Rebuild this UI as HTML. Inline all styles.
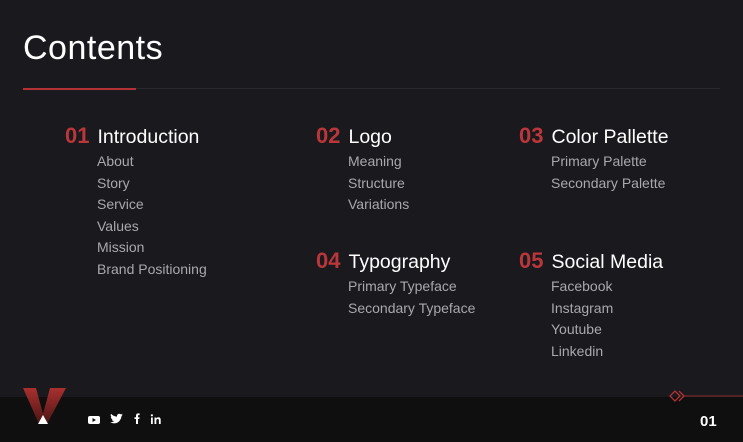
<!DOCTYPE html>
<html><head><meta charset="utf-8"><style>
*{margin:0;padding:0;box-sizing:border-box}
body{width:743px;height:442px;background:#1a191e;font-family:"Liberation Sans",sans-serif;position:relative;overflow:hidden;color:#fff}
.t{position:absolute;left:23px;top:29px;font-size:34px;font-weight:300;letter-spacing:0.5px}
.l1{position:absolute;left:23px;top:88px;width:113px;height:2px;background:#b23235}
.l2{position:absolute;left:136px;top:88px;width:584px;height:1px;background:#2a292e}
.s{position:absolute}
.s h2{font-size:19.5px;font-weight:normal;white-space:nowrap;height:24px}
.s h2 b{color:#b9373a;font-size:22px;font-weight:bold;margin-right:8px}
.s ul{list-style:none;margin-top:4px}
.s li{font-size:14px;color:#a9a8ad;height:21.5px;line-height:21.5px}
.f{position:absolute;left:0;top:397px;width:743px;height:45px;background:#0f0f10}
</style></head><body>
<div class="t">Contents</div>
<div class="l1"></div><div class="l2"></div>

<div class="s" style="left:65px;top:123px"><h2><b>01</b>Introduction</h2>
<ul style="margin-left:32px"><li>About</li><li>Story</li><li>Service</li><li>Values</li><li>Mission</li><li>Brand Positioning</li></ul></div>

<div class="s" style="left:316px;top:123px"><h2><b>02</b>Logo</h2>
<ul style="margin-left:32px"><li>Meaning</li><li>Structure</li><li>Variations</li></ul></div>

<div class="s" style="left:519px;top:123px"><h2><b>03</b>Color Pallette</h2>
<ul style="margin-left:32px"><li>Primary Palette</li><li>Secondary Palette</li></ul></div>

<div class="s" style="left:316px;top:248px"><h2><b>04</b>Typography</h2>
<ul style="margin-left:32px"><li>Primary Typeface</li><li>Secondary Typeface</li></ul></div>

<div class="s" style="left:519px;top:248px"><h2><b>05</b>Social Media</h2>
<ul style="margin-left:32px"><li>Facebook</li><li>Instagram</li><li>Youtube</li><li>Linkedin</li></ul></div>

<div class="f"></div>
<svg style="position:absolute;left:0;top:380px" width="743" height="62">
<defs><linearGradient id="g" x1="0" y1="0" x2="0" y2="1"><stop offset="0" stop-color="#a8302f"/><stop offset="1" stop-color="#4a1515"/></linearGradient></defs>
<polygon points="23,8 36,8 43,34 50,8 66,8 47,44 39,44" fill="url(#g)"/>
<polygon points="43,35 48,44 38,44" fill="#fff"/>
<g fill="#fff">
<rect x="88" y="36" width="12" height="8" rx="2"/><polygon points="92.5,38 92.5,42 96,40" fill="#0f0f10"/>
<path transform="translate(110,34)" d="M0,8 C3,10 8,10 10,6 C11,5 11.5,3 11.5,2 L13,0.5 L11.3,1 L12.2,-0.3 L10.6,0.3 C9.3,-1 7,0 7,2 L7,2.6 C4.5,2.5 2.5,1.3 1,-0.3 C0.3,1 0.7,2.5 1.8,3.3 L0.8,3 C0.8,4.3 1.8,5.2 2.8,5.5 L1.8,5.6 C2.2,6.6 3.2,7.2 4.2,7.3 C3,8.1 1.5,8.3 0,8Z"/>
<path d="M136,44 v-5 h-1.5 v-1.8 h1.5 v-1.5 c0,-1.6 1,-2.3 2.4,-2.3 h1.2 v1.7 h-.8 c-.6,0 -.8,.3 -.8,.8 v1.3 h1.6 l-.3,1.8 h-1.3 v5z"/>
<rect x="151" y="37.5" width="1.8" height="6.5"/><circle cx="151.9" cy="35.3" r="1.1"/>
<path d="M154.5,37.5 h1.7 v1 c.5,-.8 1.3,-1.2 2.3,-1.2 c1.5,0 2.2,1 2.2,2.6 v4.1 h-1.8 v-3.7 c0,-.9 -.4,-1.3 -1.1,-1.3 c-.8,0 -1.5,.5 -1.5,1.5 v3.5 h-1.8z"/>
</g>
<line x1="683" y1="16" x2="743" y2="16" stroke="#8a2a2c" stroke-width="1"/>
<polygon points="675,11 680,16 675,21 670,16" fill="none" stroke="#b23235" stroke-width="1.3"/>
<polyline points="679,11 684,16 679,21" fill="none" stroke="#b23235" stroke-width="1.3"/>
<text x="700" y="46" font-family="Liberation Sans" font-weight="bold" font-size="15" fill="#fff">01</text>
</svg>
</body></html>
